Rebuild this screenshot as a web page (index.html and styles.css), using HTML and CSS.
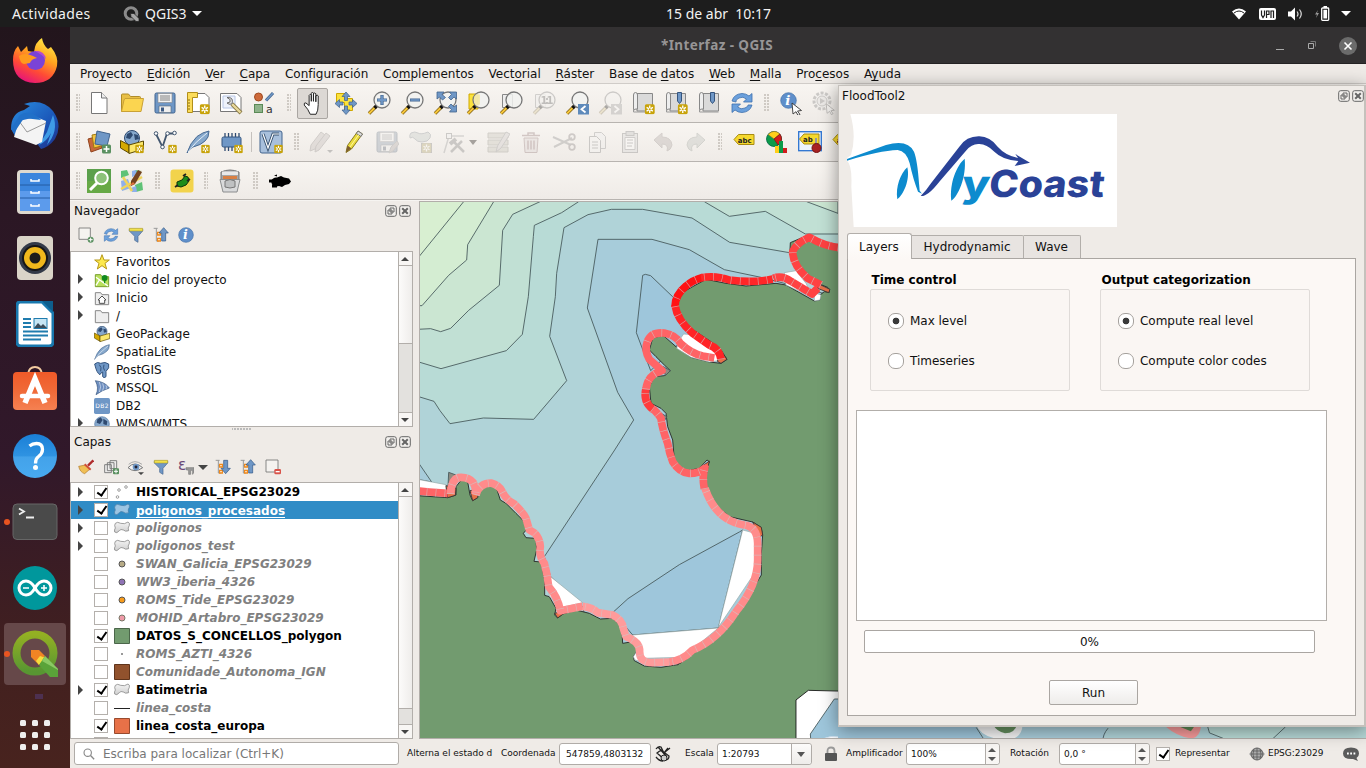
FILE: index.html
```html
<!DOCTYPE html>
<html lang="es">
<head>
<meta charset="utf-8">
<title>*Interfaz - QGIS</title>
<link rel="stylesheet" href="styles.css">
</head>
<body>
<svg class="sprite" aria-hidden="true">
<defs>
<linearGradient id="gBlue" x1="0" y1="0" x2="0" y2="1"><stop offset="0" stop-color="#1a7fd6"/><stop offset=".5" stop-color="#2f93e2"/><stop offset=".52" stop-color="#43a2ea"/><stop offset="1" stop-color="#48aaf0"/></linearGradient>
<linearGradient id="gFox" x1=".8" y1="0" x2=".3" y2="1"><stop offset="0" stop-color="#fff14a"/><stop offset=".4" stop-color="#ffa31f"/><stop offset=".7" stop-color="#ff4b35"/><stop offset="1" stop-color="#e5127c"/></linearGradient>
<linearGradient id="gBird" x1="0" y1="0" x2="1" y2="1"><stop offset="0" stop-color="#2a8ee0"/><stop offset=".6" stop-color="#1b56b8"/><stop offset="1" stop-color="#1f2f86"/></linearGradient>
<linearGradient id="gBag" x1="0" y1="0" x2="0" y2="1"><stop offset="0" stop-color="#f05a28"/><stop offset=".5" stop-color="#f06a38"/><stop offset="1" stop-color="#f58152"/></linearGradient>
<linearGradient id="gQ" x1="0" y1="0" x2="0" y2="1"><stop offset="0" stop-color="#93b023"/><stop offset="1" stop-color="#589632"/></linearGradient>
<linearGradient id="gPoly" x1="0" y1="0" x2="0" y2="1"><stop offset="0" stop-color="#f4f4f4"/><stop offset="1" stop-color="#cfcfcf"/></linearGradient>
</defs>
<symbol id="star-badge" viewBox="0 0 10 10"><rect x=".3" y=".3" width="9.4" height="9.4" rx="1.5" fill="#c8a30a"/><path d="M5 1.5V8.500M2 3.300l6 3.400M8 3.300L2 6.700" stroke="#fff" stroke-width="1.300"/><circle cx="5" cy="5" r="1" fill="#c8a30a"/></symbol>
<symbol id="new" viewBox="0 0 24 24"><path d="M4.500 1.500h10l5.500 5.500v15.500H4.500z" fill="#fff" stroke="#777"/><path d="M14.500 1.500v5.500H20" fill="#eee" stroke="#777"/></symbol>
<symbol id="open" viewBox="0 0 24 24"><path d="M1.500 20.500V4q0-1 1-1h6l2 2.500h9q1 0 1 1V8" fill="#e8bf45" stroke="#b08c28"/><path d="M1.500 20.500L4 9l1-1.500h18.500L21 20.500z" fill="#fbd550" stroke="#c9a135"/></symbol>
<symbol id="save" viewBox="0 0 24 24"><rect x="2" y="2" width="20" height="20" rx="1.500" fill="#6f97c6" stroke="#42648e"/><rect x="5" y="2.500" width="14" height="9" fill="#f2f2f2" stroke="#888" stroke-width=".6"/><path d="M7 5h10M7 7h10M7 9h10" stroke="#666" stroke-width=".8"/><path d="M6 21.500v-6.500h12v6.500z" fill="#eee" stroke="#567" stroke-width=".6"/><rect x="8" y="16.500" width="3" height="4" fill="#3d5b85"/></symbol>
<symbol id="layout" viewBox="0 0 24 24"><path d="M4 2.500h15l4 4v14H4z" fill="#fff" stroke="#777"/><path d="M1.500 1.500h10v5h-5v15h-5z" fill="#fbdc5a" stroke="#b28f1a"/><path d="M2 9h2M2 12h2M2 15h2M2 18h2" stroke="#8a6d10"/><use href="#star-badge" x="13.500" y="13" width="10.500" height="10.500"/></symbol>
<symbol id="layoutmgr" viewBox="0 0 24 24"><path d="M1.500 2.500H18l4 4v14H1.500z" fill="#fff" stroke="#777"/><path d="M4 5h12v12H4z" fill="#eef2fb" stroke="#b8c6e5"/><path d="M13 13l9 9" stroke="#8a7a45" stroke-width="4"/><path d="M13 13l8.500 8.500" stroke="#e9d99c" stroke-width="2.400"/><path d="M8 6.500q3-1 5 1.500 1 2 0 5-3 1-5-1l3-1V8.500z" fill="#ddd" stroke="#555" stroke-width=".8"/></symbol>
<symbol id="style" viewBox="0 0 24 24"><circle cx="6.500" cy="6" r="4" fill="#cd6a3a" stroke="#a04a20"/><path d="M14 9.500L21 2" stroke="#42648e" stroke-width="3"/><path d="M14 9.500L21 2" stroke="#6f97c6" stroke-width="1.600"/><rect x="2.500" y="13.500" width="8" height="8" fill="#8fb38b" stroke="#5a8a56"/><text x="14" y="22" font-size="11" fill="#333">a</text></symbol>
<symbol id="hand" viewBox="0 0 24 24"><path d="M9 22Q7 17 3.500 13.500 3 11 5 11.500L8 14V4.500q1-2 2 0V10 2.500q1-2 2 0V10 3q1.200-1.500 2.200 0v7.500V5q1.300-1.500 2.200 0v8q0 6-2 9z" transform="translate(-.5 -.5) scale(1.080)" fill="#fff" stroke="#222" stroke-width=".9"/></symbol>
<symbol id="pansel" viewBox="0 0 24 24"><path d="M2.500 2.500h10v5h6v12h-8v-8h-8z" fill="#fbe23c" stroke="#d0a800"/><path d="M12 1l4 4.500h-2.500v4h-3v-4H8zM12 23.500l4-4.500h-2.500v-4h-3v4H8zM1 12.500l4.500-4V11H9v3H5.500v2.500zM23 12.500l-4.500-4V11H15v3h3.500v2.500z" fill="#6f97c6" stroke="#3e5f8a" stroke-width=".7"/></symbol>
<symbol id="lens" viewBox="0 0 24 24"><path d="M2 22.500l7-7" stroke="#7b5d12" stroke-width="3.400"/><path d="M2 22.500l6-6" stroke="#f6c63a" stroke-width="2"/><path d="M7.500 17l2.500-2.500" stroke="#111" stroke-width="3.400"/><circle cx="15" cy="9" r="8" fill="#f1f2f0" fill-opacity=".85" stroke="#777" stroke-width="1.300"/></symbol>
<symbol id="zin" viewBox="0 0 24 24"><use href="#lens"/><path d="M15 4v10M10 9h10" stroke="#42648e" stroke-width="3.200"/><path d="M15 4.500v9M10.500 9h9" stroke="#6f97c6" stroke-width="1.800"/></symbol>
<symbol id="zout" viewBox="0 0 24 24"><use href="#lens"/><path d="M10 9h10" stroke="#42648e" stroke-width="3"/><path d="M10.500 9h9" stroke="#6f97c6" stroke-width="1.600"/></symbol>
<symbol id="zfull" viewBox="0 0 24 24"><use href="#lens"/><path d="M4 1h7L9 3.500l3.500 3L9.500 9 6.500 6 4 8zM23.500 1v7L21 6l-3 3-2.500-2.500 3-3L16.500 1zM23.500 21h-7l2-2.500-3-3L18 13l3 3 2.500-2z" fill="#6f97c6" stroke="#42648e" stroke-width=".8"/></symbol>
<symbol id="zsel" viewBox="0 0 24 24"><path d="M3 3h9v15H3z" fill="#fbe23c" stroke="#d0a800"/><use href="#lens"/><path d="M8 5.500q-1 5 2 9l4-1V3.500h-4z" fill="#f3e58a" fill-opacity=".6"/></symbol>
<symbol id="zlay" viewBox="0 0 24 24"><path d="M3.500 3.500h10v13h-10z" fill="#eee" stroke="#888"/><use href="#lens"/></symbol>
<symbol id="znat" viewBox="0 0 24 24"><path d="M3.500 3.500h10v13h-10z" fill="#eee" stroke="#888"/><use href="#lens"/><text x="8.500" y="12.500" font-size="10" font-weight="bold" fill="#555" textLength="13">1:1</text></symbol>
<symbol id="zlast" viewBox="0 0 24 24"><use href="#lens"/><rect x="13" y="13" width="11" height="10.500" fill="#5e8abb"/><path d="M20.500 15l-4 3.300 4 3.200" fill="none" stroke="#fff" stroke-width="1.800"/></symbol>
<symbol id="znext" viewBox="0 0 24 24"><use href="#lens"/><rect x="13" y="13" width="11" height="10.500" fill="#999"/><path d="M16.500 15l4 3.300-4 3.200" fill="none" stroke="#fff" stroke-width="1.800"/></symbol>
<symbol id="map" viewBox="0 0 24 24"><path d="M6 2.500h15.500V20H6z" fill="#dadada" stroke="#888"/><path d="M2.500 4q0-2.500 2-2.500T6.500 4v14H5q-2.500 0-2.500 2z" fill="#eee" stroke="#888"/><path d="M2.500 18v3h19" fill="none" stroke="#999"/></symbol>
<symbol id="mapnew" viewBox="0 0 24 24"><use href="#map"/><use href="#star-badge" x="13.500" y="13" width="10.500" height="10.500"/></symbol>
<symbol id="flag" viewBox="0 0 24 24"><path d="M13.500 1.500h4V10l-2 2.500-2-2.500z" fill="#6f97c6" stroke="#35557f"/></symbol>
<symbol id="bmnew" viewBox="0 0 24 24"><use href="#mapnew"/><use href="#flag"/></symbol>
<symbol id="bm" viewBox="0 0 24 24"><use href="#map"/><use href="#flag"/></symbol>
<symbol id="refresh" viewBox="0 0 24 24"><path d="M2 10Q4 3 12 2.500q4 0 7 2.500l3-2.500V11h-8.500l3-3Q13 5 9 7t-3 4z" fill="#6ba0dc" stroke="#3c70ad" stroke-width=".8"/><path d="M22 14q-2 7-10 7.500-4 0-7-2.500l-3 2.500V13h8.500l-3 3Q11 19 15 17t3-3z" fill="#6ba0dc" stroke="#3c70ad" stroke-width=".8"/></symbol>
<symbol id="cursor" viewBox="0 0 12 14"><path d="M1 1l9.500 7.500-4 .5 2.500 3.500-2 1-2-3.800L2 12z" fill="#fff" stroke="#333" stroke-width=".9"/></symbol>
<symbol id="info" viewBox="0 0 24 24"><circle cx="12" cy="12" r="11" fill="#5f8fca" stroke="#4673aa"/><text x="7.500" y="18.500" font-size="19" font-style="italic" font-weight="bold" class="serif" fill="#fff">i</text></symbol>
<symbol id="identify" viewBox="0 0 24 24"><use href="#info" x="1" y="1" width="17" height="17"/><use href="#cursor" x="12" y="11" width="12" height="14"/></symbol>
<symbol id="gear" viewBox="0 0 24 24"><circle cx="10" cy="10" r="8" fill="#eee" stroke="#777" stroke-width="3" stroke-dasharray="3 1.500"/><circle cx="10" cy="10" r="5" fill="#ddd" stroke="#777"/><path d="M8 7l5 3-5 3z" fill="#777"/><use href="#cursor" x="13" y="12" width="11" height="12"/></symbol>
<symbol id="sources" viewBox="0 0 24 24"><path d="M1 9l11-3 3 12-11 4z" fill="#c9683a" stroke="#90431d"/><path d="M5 5l11-2 2 12-11 3z" fill="#f4c542" stroke="#a17a10"/><path d="M10 1l13 3-3 12-12-2z" fill="#6f97c6" stroke="#42648e"/><rect x="15" y="14.500" width="9" height="9" rx="1.500" fill="#5a9060"/><path d="M19.500 16v6M16.500 19h6" stroke="#fff" stroke-width="1.500"/></symbol>
<symbol id="gpk" viewBox="0 0 24 24"><circle cx="12" cy="8" r="7.500" fill="#86a8cc" stroke="#2f4a70"/><path d="M7 4l4-2 2 3-3 4-4-1zM14 4l4 1 1 4-4 1z" fill="#2f4a70"/><path d="M.5 10.500L9 15v8L.5 18z" fill="#d5a900" stroke="#5c4a00"/><path d="M9 15l14.500-4v8L9 23.500z" fill="#fbe76b" stroke="#5c4a00"/></symbol>
<symbol id="gpkn" viewBox="0 0 24 24"><use href="#gpk"/><use href="#star-badge" x="15" y="14.500" width="9" height="9"/></symbol>
<symbol id="shp" viewBox="0 0 24 24"><path d="M3 4l6.500 13L14 3.500h7" fill="none" stroke="#42566e" stroke-width="1.800"/><g fill="#fff" stroke="#42566e"><circle cx="3" cy="3.500" r="1.800"/><circle cx="9.500" cy="17" r="1.800"/><circle cx="14.500" cy="3.500" r="1.800"/><circle cx="21.500" cy="3" r="1.800"/></g><use href="#star-badge" x="15" y="14.500" width="9" height="9"/></symbol>
<symbol id="feather" viewBox="0 0 24 24"><path d="M1 23Q4 13 11 6.500 17 2 23 1q0 7-4 10-4 4-12 6-4 3-6 6z" fill="#86a8cc" stroke="#486a93"/><path d="M2 22Q9 12 21 3" stroke="#e5eef7" fill="none"/></symbol>
<symbol id="feathern" viewBox="0 0 24 24"><use href="#feather"/><use href="#star-badge" x="15" y="14.500" width="9" height="9"/></symbol>
<symbol id="chip" viewBox="0 0 24 24"><path d="M6 3v18M9.500 3v18M13 3v18M16.500 3v18M20 3v18" stroke="#2f4a70" stroke-width="1.300"/><rect x="3" y="7" width="19" height="10" rx="1.500" fill="#6f97c6" stroke="#35557f"/><use href="#star-badge" x="15" y="14.500" width="9" height="9"/></symbol>
<symbol id="virt" viewBox="0 0 24 24"><rect x="1" y="1" width="22" height="22" rx="2" fill="#a8c0dc" stroke="#42648e"/><path d="M4 4l5 14 5-14h6" fill="none" stroke="#35506e" stroke-width="3"/><path d="M4 4l5 14 5-14h6" fill="none" stroke="#fff" stroke-width="1.200"/><use href="#star-badge" x="15" y="14.500" width="9" height="9"/></symbol>
<symbol id="pencil" viewBox="0 0 24 24"><path d="M4 22.500l1.500-7L16 1l4.500 3-11 15z" fill="#eadb3d" stroke="#8a7c20"/><path d="M16 1l4.500 3-1.500 2.500-4.700-3z" fill="#ddd" stroke="#777"/><path d="M4 22.500l1.500-7 4 3z" fill="#7e5e2f"/><path d="M8 17L17 4.500" stroke="#fff8a0"/></symbol>
<symbol id="pencils" viewBox="0 0 24 24"><g fill="#c5b3ad" stroke="#8c7f7c"><path d="M1 21l1-6L12 2l4 3L6 19z"/><path d="M6 22l1-6L17 3l4 3-11 14z"/></g><path d="M18 20h6l-3 3z" fill="#666"/></symbol>
<symbol id="savee" viewBox="0 0 24 24"><use href="#save"/><path d="M14 23l2-6 6-6 2 3-6 7z" fill="#b5a19b" stroke="#888"/></symbol>
<symbol id="poly" viewBox="0 0 24 24"><path d="M3 3q4-2 7 0t10-1q4 2 2 6t-8 4q-5 0-7-3T2 8q-1-3 1-5z" fill="#b7c9bf" stroke="#789"/><rect x="13" y="13" width="11" height="10" fill="#777"/><use href="#star-badge" x="13" y="13" width="11" height="10"/></symbol>
<symbol id="vertex" viewBox="0 0 24 24"><path d="M3 23L8 6h15" fill="none" stroke="#999" stroke-width="1.500"/><rect x="5.500" y="3.500" width="5" height="5" fill="#eee" stroke="#777"/><path d="M10 22l11-11M12 11l11 11" stroke="#777" stroke-width="2.500"/><path d="M9 14l6-5" stroke="#777" stroke-width="4"/></symbol>
<symbol id="attrs" viewBox="0 0 24 24"><path d="M2 3h20v5H2zM2 10h20v5H2zM2 17h20v5H2z" fill="#c7c0a2" stroke="#8e8a72"/><path d="M10 22l1.500-6L20 2l4 2-9 14z" fill="#cfc3c0" stroke="#888"/></symbol>
<symbol id="trash" viewBox="0 0 24 24"><path d="M5 8h14l-1 14.500H6z" fill="#e5cfcd" stroke="#a66"/><path d="M3 5.500h18M9 5V3h6v2M9 10.500v9M12 10.500v9M15 10.500v9" fill="none" stroke="#a66" stroke-width="1.500"/></symbol>
<symbol id="cut" viewBox="0 0 24 24"><path d="M1 7l18 8M2 17L20 8" stroke="#888" stroke-width="2"/><circle cx="20" cy="7" r="2.800" fill="none" stroke="#877" stroke-width="1.800"/><circle cx="20" cy="17" r="2.800" fill="none" stroke="#877" stroke-width="1.800"/></symbol>
<symbol id="copy" viewBox="0 0 24 24"><path d="M9.500 2.500h7l4 4v12h-11z" fill="#eee" stroke="#888"/><path d="M4.500 6.500h7l4 4v12h-11z" fill="#f5f5f5" stroke="#777"/><path d="M7 12h6M7 15h6M7 18h6" stroke="#777"/></symbol>
<symbol id="paste" viewBox="0 0 24 24"><rect x="4.500" y="3.500" width="15" height="19" fill="#d5d5d5" stroke="#777"/><rect x="8" y="1.500" width="8" height="4" fill="#bbb" stroke="#777"/><path d="M7 7.500h10v12H7z" fill="#fff" stroke="#888"/><path d="M9 10h6M9 13h6M9 16h5" stroke="#777"/></symbol>
<symbol id="undo" viewBox="0 0 24 24"><path d="M3 10l8-7v4q9 0 10 8-1 5-5 6 2-7-5-7v4z" fill="#b9a29b" stroke="#9a8982"/></symbol>
<symbol id="redo" viewBox="0 0 24 24"><path d="M21 10l-8-7v4Q4 7 3 15q1 5 5 6-2-7 5-7v4z" fill="#b3bdb1" stroke="#8d9a8b"/></symbol>
<symbol id="abc" viewBox="0 0 24 24"><path d="M2 9.500L6.500 4.500h15.500v10H6.500z" fill="#f6d92e" stroke="#a78b12"/><text x="5.800" y="12.500" font-size="7" font-weight="bold" fill="#222">abc</text></symbol>
<symbol id="chart" viewBox="0 0 24 24"><circle cx="9" cy="9" r="7.500" fill="#0c9b4a" stroke="#064" stroke-width=".8"/><path d="M9 9L3 4.500Q9-1.500 15 4z" fill="#ffcf1a" stroke="#863" stroke-width=".6"/><path d="M9 9l6-5q4 6-2 11z" fill="#d11c1c" stroke="#711" stroke-width=".6"/><path d="M10 16h4v7h-4z" fill="#ffcf1a"/><path d="M14 11h4v12h-4z" fill="#0c9b4a"/><path d="M18 18h4v5h-4z" fill="#d11c1c"/></symbol>
<symbol id="abpin" viewBox="0 0 24 24"><rect x=".7" y="1.700" width="22.600" height="19" fill="#eef4fc" stroke="#2a72d0" stroke-width="1.300"/><path d="M1.500 9L6 4h15v10H6z" fill="#f6d92e" stroke="#a78b12"/><text x="5" y="12" font-size="7" font-weight="bold" fill="#222">ab</text><path d="M18 8v8" stroke="#999" stroke-width="2"/><circle cx="18.500" cy="18" r="4.500" fill="#a82222" stroke="#711"/></symbol>
<symbol id="osm" viewBox="0 0 24 24"><rect width="24" height="24" fill="#67a946"/><path d="M0 0h24v12H0z" fill="#5ba04c"/><path d="M3 21l7-7" stroke="#fff" stroke-width="3"/><circle cx="14.500" cy="9" r="6.300" fill="#8cc27a" stroke="#fff" stroke-width="2"/></symbol>
<symbol id="osmmap" viewBox="0 0 24 24"><path d="M1 2l21-1 1 21-14 1-8-2z" fill="#eeebdf"/><path d="M1 2l6-1 2 5-8 3zM15 16l7-3 1 8-7 2zM15 1l6 1-4 4z" fill="#5fc277"/><path d="M1 12l7-2 3 9-9 3zM12 2l4-1 1 5-5 2zM11 19l5-2 1 6h-5z" fill="#8fb0ea"/><path d="M3 8l9 14M1 20L22 8" stroke="#f0d35b" stroke-width="2.500"/><path d="M11 12l7-11 4 2-7 12-4 2z" fill="#73421f"/><path d="M9 17l4-4 2 2z" fill="#e2733a"/></symbol>
<symbol id="plug" viewBox="0 0 24 24"><rect x=".5" y=".5" width="23" height="23" rx="3" fill="#f2d34c"/><path d="M7 13l5-2 3-4 3 1 1 4-3 4-5 2-4-1z" fill="#1d8c1a" stroke="#0b350a"/><path d="M13 7l3-2M17 12l3-2M5 18l3-2" stroke="#222" stroke-width="1.800"/></symbol>
<symbol id="bucket" viewBox="0 0 24 24"><path d="M3 3q9-4 18 0v8H3z" fill="#a5a7a8" stroke="#777"/><rect x="4" y="2.500" width="16" height="3.500" fill="#e9e9e9"/><rect x="5" y="7" width="14" height="3.500" fill="#d98043"/><path d="M2 10.500h20l-3 12.500H5z" fill="#d9dadb" stroke="#8b8d8e"/><path d="M7 12q5-3 10 0v6q-5 2-10 0z" fill="#bfc1c2" stroke="#777"/></symbol>
<symbol id="blot" viewBox="0 0 24 24"><path d="M3 12q2-4 6-3.500l4-1.500 3 1.500 5 1 2 3-2 2.500-4 1-3 2-3-1-5 1-2-2.500z"/><path d="M1 10.500h5v3H1zM4 16h5v2.500H4zM6 6.500l3-1v2z"/></symbol>
<symbol id="filter" viewBox="0 0 24 24"><path d="M2 3h20v3l-7 8v9l-5-3v-6L2 6z" fill="#6f97c6" stroke="#42648e"/><path d="M2 2h20v4H2z" fill="#f1e14d" stroke="#b19a20" stroke-width=".8"/></symbol>
<symbol id="addsel" viewBox="0 0 24 24"><path d="M1.500 1.500h17v17h-17z" fill="#f5f3f0" stroke="#777" stroke-width="1.300"/><circle cx="19" cy="19" r="4.500" fill="#5a9060"/><path d="M19 16v6M16 19h6" stroke="#fff" stroke-width="1.500"/></symbol>
<symbol id="collapse" viewBox="0 0 24 24"><path d="M1 2h6M5 2v19h4M5 10h4" fill="none" stroke="#999" stroke-width="1.500"/><path d="M7 8h4v4H7zM7 17h4v4H7z" fill="#fff" stroke="#f08a1d" stroke-width="2"/><path d="M16 1l7 8h-4v12h-6V9H9z" fill="#6f97c6" stroke="#2e5485"/></symbol>
<symbol id="expand" viewBox="0 0 24 24"><path d="M1 2h6M5 2v19h4M5 10h4" fill="none" stroke="#999" stroke-width="1.500"/><path d="M7 8h4v4H7zM7 17h4v4H7z" fill="#fff" stroke="#f08a1d" stroke-width="2"/><path d="M16 22l-7-8h4V2h6v12h4z" fill="#6f97c6" stroke="#2e5485"/></symbol>
<symbol id="brush" viewBox="0 0 24 24"><path d="M15 10l8-8" stroke="#b02c2c" stroke-width="3.500"/><path d="M1 11l10-2 7 6-8 7Q3 20 1 11z" fill="#f0bf55" stroke="#b0782a"/><path d="M10 8l9 8" stroke="#d0503a" stroke-width="3"/></symbol>
<symbol id="group" viewBox="0 0 24 24"><path d="M2.500 8.500h10v12h-10z M6.500 5.500h10v12h-10zM10.500 2.500h10v12h-10z" fill="#eee" fill-opacity=".7" stroke="#777" stroke-width="1.400"/><rect x="15" y="14" width="9" height="9" rx="1.500" fill="#5a9060"/><path d="M19.500 15.500v6M16.500 18.500h6" stroke="#fff" stroke-width="1.500"/></symbol>
<symbol id="eye" viewBox="0 0 24 24"><path d="M0 13Q10 2 22 13 10 22 0 13z" fill="#f3f3f3" stroke="#777" stroke-width="1.500"/><path d="M1 8Q10 0 21 8" fill="none" stroke="#aaa" stroke-width="1.500"/><circle cx="12" cy="12" r="5" fill="#6f97c6"/><circle cx="12" cy="12" r="2.200" fill="#223"/><path d="M15 20h9l-4.500 4z" fill="#444"/></symbol>
<symbol id="eps" viewBox="0 0 24 24"><text x="0" y="16" font-size="23" fill="#6a4a78">ε</text><path d="M12 13h12v6l-2 4v-6h-3v6h-3v-6l-4-1z" fill="#999" stroke="#777"/></symbol>
<symbol id="remove" viewBox="0 0 24 24"><path d="M1.500 1.500h18v18h-18z" fill="#f5f3f0" stroke="#777" stroke-width="1.300"/><rect x="14" y="15" width="10" height="8" rx="2" fill="#d9534a"/><path d="M16 19h6" stroke="#fff" stroke-width="2"/></symbol>
<symbol id="fstar" viewBox="0 0 24 24"><path d="M12 1l3 8h8l-6.500 5L19 22.500 12 17.500 5 22.500 7.500 14 1 9h8z" fill="#fde94d" stroke="#b69818" stroke-width="1.500"/></symbol>
<symbol id="folder" viewBox="0 0 24 24"><path d="M2 4h8l2 3h10v15H2z" fill="#eee" stroke="#888" stroke-width="1.500"/></symbol>
<symbol id="home" viewBox="0 0 24 24"><use href="#folder"/><path d="M6 15l6-6 6 6h-2v5h-8v-5z" fill="#fff" stroke="#444" stroke-width="1.400"/></symbol>
<symbol id="fproj" viewBox="0 0 24 24"><path d="M2 4h8l2 3h10v15H2z" fill="#b8e05c" stroke="#7aa02c" stroke-width="1.500"/><path d="M3 8l18 13M8 12l-5 8" stroke="#fff" stroke-width="2"/><circle cx="16" cy="9" r="4.500" fill="#128a1e"/><path d="M16 10v7" stroke="#128a1e" stroke-width="2"/></symbol>
<symbol id="pg" viewBox="0 0 24 24"><path d="M1 3q4-4 9-1 7-3 12 1 2 6-4 11v8q-3 3-5 0v-7q-3 1-4 4-5-2-8-16z" fill="#6f97c6" stroke="#35557f" stroke-width="1.500"/><path d="M8 4q4 4 2 10M15 4q-2 5 1 9" fill="none" stroke="#35557f" stroke-width="1.500"/></symbol>
<symbol id="ms" viewBox="0 0 24 24"><path d="M2 1q15 2 21 11-10 3-20 10Q8 12 2 1z" fill="#6f8fc0" stroke="#35557f"/><path d="M8 3q4 7 0 15M13 5q3 6 0 11M18 8q2 3 0 6" fill="none" stroke="#c9d7ea" stroke-width="1.200"/></symbol>
<symbol id="db2" viewBox="0 0 24 24"><rect width="24" height="24" rx="2.500" fill="#6f97c6"/><text x="2" y="15" font-size="9" fill="#fff" textLength="20">DB2</text></symbol>
<symbol id="globe" viewBox="0 0 24 24"><circle cx="12" cy="12" r="11" fill="#86a8cc" stroke="#5a7da8"/><path d="M5 5l5-3 3 4-4 6-5-2zM14 4l6 4-1 6-5-2zM10 15l5 2-3 5z" fill="#2f4a70"/></symbol>
<symbol id="gpoly" viewBox="0 0 24 24"><path d="M2 5q3-3 8 0 6 2 11-2 3 1 2 5-3 4-1 8-5 2-8-1-4-2-6 1-4 5-7 2-1-3 1-6-2-4 0-7z" fill="url(#gPoly)" stroke="#888" stroke-width="1.200"/></symbol>
<symbol id="float" viewBox="0 0 12 12"><rect x=".7" y=".7" width="10.600" height="10.600" rx="2" fill="#f3f1ee" stroke="#666"/><path d="M5 3h4v4H5z M3 5h4v4H3z" fill="#f3f1ee" stroke="#666"/></symbol>
<symbol id="close" viewBox="0 0 12 12"><rect x=".7" y=".7" width="10.600" height="10.600" rx="2" fill="#f3f1ee" stroke="#666"/><path d="M3.200 3.200l5.600 5.600M8.800 3.200L3.200 8.800" stroke="#666" stroke-width="2"/></symbol>
</svg>

<header class="topbar">
  <span class="act">Actividades</span>
  <span class="app"><svg class="qmini" viewBox="0 0 16 16"><circle cx="8" cy="7.500" r="5.800" fill="none" stroke="#8b8b8b" stroke-width="3"/><path d="M7.500 7.500h3.500l5 5v3h-3l-5-5z" fill="#a5a5a5" stroke="#1d1d1d" stroke-width=".7"/></svg><span>QGIS3</span><svg class="tri" viewBox="0 0 10 5"><path d="M0 0h10L5 5z" fill="#fff"/></svg></span>
  <span class="clock">15 de abr&nbsp; 10:17</span>
  <span class="tray">
    <svg width="16" height="14" viewBox="0 0 16 14"><path d="M1 4.500Q8-1.500 15 4.500L8 12.500z" fill="#fff"/><path d="M3 6Q8 2 13 6" fill="none" stroke="#1d1d1d" stroke-width="1"/></svg>
    <svg width="17" height="12" viewBox="0 0 17 12"><rect width="17" height="12" rx="2" fill="#fff"/><path d="M2.500 2.500V7L4 9.500 5.500 7V2.500M7.500 10V3h2.500v3.500H7.500M12 10V3h2.500v7" fill="none" stroke="#1d1d1d" stroke-width="1.200"/></svg>
    <svg width="16" height="14" viewBox="0 0 16 14"><path d="M1 4.500h3l4-4v13l-4-4H1z" fill="#fff"/><path d="M10 4.500q2 2.500 0 5M12.500 2.500q3.500 4.500 0 9" fill="none" stroke="#ddd" stroke-width="1.200"/></svg>
    <svg width="15" height="15" viewBox="0 0 15 15"><path d="M3 4L0 8.500h2L1 12l3-5H2z" fill="#999"/><rect x="6.700" y="2" width="7" height="12.300" rx=".8" fill="none" stroke="#fff" stroke-width="1.300"/><path d="M8.500 0h3.500v2H8.500zM8.400 3.800h3.700v8.700H8.400z" fill="#fff"/></svg>
    <svg class="tri" viewBox="0 0 10 5"><path d="M0 0h10L5 5z" fill="#fff"/></svg>
  </span>
</header>

<div class="desktop">
<nav class="dock">
  <div class="slot"><svg width="48" height="48" viewBox="0 0 48 48"><path d="M24 47Q2 46 2 24 2 15 7 10l3 6 6-6 1 5 6 1Q24 6 31 2q1 7 6 11l3-2q8 10 6 19-4 17-22 17z" fill="url(#gFox)"/><circle cx="24.500" cy="24.500" r="9.500" fill="#7a43d6"/><path d="M24 15q9-1 11 8-5-5-11-8z" fill="#b34bd0"/><path d="M8 20q5-4 14 0l4 2q-6 1-7 5l-6 1q-4-1-5-8z" fill="#ff9a1e"/></svg></div>
  <div class="slot"><svg width="50" height="50" viewBox="0 0 50 50"><path d="M14 3q18-6 29 7 10 14 2 28-6 8-14 10l-6-8L5 35 1 28Q1 12 14 9l6-4z" fill="url(#gBird)"/><path d="M43 14q6 16-6 30l4-12q-4 8-12 12l8-13z" fill="#3e9be6"/><path d="M9 20l17-4 10 4-4 21-6 3L4 36z" fill="#f4f4f4"/><path d="M9 20l8 11 19-9" fill="none" stroke="#999"/><path d="M1 28l9-14q6-4 13-1 6 3 8 6L14 17 4 32z" fill="#2170c8"/></svg></div>
  <div class="slot"><svg width="38" height="46" viewBox="0 0 38 46"><rect x="1" y="1" width="36" height="44" rx="4" fill="#ded9cf"/><rect x="4" y="4" width="30" height="38" rx="1" fill="#3b85dd"/><path d="M4 22h30v20H4z" fill="#5c9bec"/><path d="M4 16h30M4 29h30" stroke="#245ca4"/><path d="M15 10v2h8v-2M15 22v2h8v-2M15 35v2h8v-2" fill="none" stroke="#fff" stroke-width="1.500"/></svg></div>
  <div class="slot"><svg width="38" height="46" viewBox="0 0 38 46"><rect x="1" y="1" width="36" height="44" rx="4" fill="#dad4c8"/><circle cx="19" cy="23" r="16" fill="#333a48"/><circle cx="19" cy="23" r="13" fill="#171717"/><circle cx="19" cy="23" r="11" fill="#f0b81c"/><circle cx="19" cy="23" r="5.500" fill="#1c1c1c"/></svg></div>
  <div class="slot"><svg width="38" height="46" viewBox="0 0 38 46"><path d="M4 1h22l11 11v29q0 4-4 4H5q-4 0-4-4V5q0-4 3-4z" fill="#fff" stroke="#1878ae" stroke-width="3"/><path d="M26 0h11v11z" fill="#0e5e8d"/><path d="M7 18h8M7 22h8M7 26h8M7 30.500h25M7 34.500h25M7 38.500h18" stroke="#207cae" stroke-width="1.800"/><rect x="18" y="17.500" width="13" height="10" fill="#c7e6f5" stroke="#207cae"/><path d="M18 27l4-5 3 3 2-2 4 4z" fill="#3b4c5a"/></svg></div>
  <div class="slot"><svg class="bag" width="46" height="46" viewBox="0 0 46 46"><path d="M16 9q1-7 7-7t7 7" fill="none" stroke="#f3cba0" stroke-width="2"/><rect x="1" y="7" width="44" height="38" rx="4" fill="url(#gBag)"/><path d="M13 38l10-24 10 24" fill="none" stroke="#fff" stroke-width="5.500"/><path d="M10 31h26" stroke="#fff" stroke-width="4.500" stroke-linecap="round"/></svg></div>
  <div class="slot"><svg width="46" height="46" viewBox="0 0 46 46"><circle cx="23" cy="23" r="22" fill="url(#gBlue)"/><path d="M17.500 13q3-2.500 7-2.500 6 0 6 6 0 4-4 7-3 2-3 7" fill="none" stroke="#fff" stroke-width="3.300"/><circle cx="23.500" cy="34.500" r="2.500" fill="#fff"/></svg></div>
  <div class="slot run"><svg width="46" height="38" viewBox="0 0 46 38"><rect x="1" y="1" width="44" height="35.500" rx="4" fill="#4a4a4a" stroke="#666"/><path d="M7 5.500l5 3-5 3M14 14.500h8" fill="none" stroke="#eee" stroke-width="1.800"/></svg></div>
  <div class="slot"><svg width="46" height="46" viewBox="0 0 46 46"><circle cx="23" cy="23" r="22" fill="#00979c"/><path d="M23 23q-4-7-9-7a7 7 0 000 14q5 0 9-7 4-7 9-7a7 7 0 010 14q-5 0-9-7z" fill="none" stroke="#fff" stroke-width="3"/><path d="M11 23h6M29 23h6M32 20v6" stroke="#fff" stroke-width="1.500"/></svg></div>
  <div class="slot run"><div class="active"><svg width="48" height="48" viewBox="0 0 48 48"><circle cx="24" cy="23" r="18.500" fill="none" stroke="url(#gQ)" stroke-width="8"/><path d="M20 20l8 0 6 6-6 9-8-8z" fill="#f08424"/><path d="M29 26l-4 5 3 4 7-7z" fill="#f7dc3e"/><path d="M34 26l13 13v8h-8L28 35z" fill="#5aa339"/><path d="M34 26l13 13v1L31 31z" fill="#8bc964"/></svg></div></div>
  <div class="mini"></div>
  <div class="apps"><i></i><i></i><i></i><i></i><i></i><i></i><i></i><i></i><i></i></div>
</nav>

<main class="window">
  <div class="titlebar"><span>*Interfaz - QGIS</span><div class="wbtns"><svg width="9" height="12"><path d="M0 9.500h8" stroke="#aaa"/></svg><svg width="9" height="9"><path d="M.5 2.500h5v5h-5z" fill="none" stroke="#aaa"/><path d="M2.500.5h5v5" fill="none" stroke="#777"/></svg><b><svg width="18" height="18"><circle cx="9" cy="9" r="9" fill="#6b6b6b"/><path d="M5.500 5.500l7 7M12.500 5.500l-7 7" stroke="#fff" stroke-width="1.600"/></svg></b></div></div>
  <div class="menubar"><span>Pro<u>y</u>ecto</span><span><u>E</u>dición</span><span><u>V</u>er</span><span><u>C</u>apa</span><span>Co<u>n</u>figuración</span><span>Co<u>m</u>plementos</span><span>Vect<u>o</u>rial</span><span><u>R</u>áster</span><span>Base de <u>d</u>atos</span><span><u>W</u>eb</span><span><u>M</u>alla</span><span>Pro<u>c</u>esos</span><span>A<u>y</u>uda</span></div>
  <div class="toolbar"><i class="grip first"></i>
    <svg><use href="#new"/></svg><svg><use href="#open"/></svg><svg><use href="#save"/></svg><svg><use href="#layout"/></svg><svg><use href="#layoutmgr"/></svg><svg><use href="#style"/></svg><i class="grip"></i>
    <span class="pressed"><svg><use href="#hand"/></svg></span><svg><use href="#pansel"/></svg><svg><use href="#zin"/></svg><svg><use href="#zout"/></svg><svg><use href="#zfull"/></svg><svg><use href="#zsel"/></svg><svg><use href="#zlay"/></svg><svg class="off"><use href="#znat"/></svg><svg><use href="#zlast"/></svg><svg class="off"><use href="#znext"/></svg><svg><use href="#mapnew"/></svg><svg><use href="#bmnew"/></svg><svg><use href="#bm"/></svg><svg><use href="#refresh"/></svg><i class="grip wide"></i><svg><use href="#identify"/></svg><svg class="off"><use href="#gear"/></svg>
  </div>
  <div class="toolbar"><i class="grip first"></i>
    <svg><use href="#sources"/></svg><svg><use href="#gpkn"/></svg><svg><use href="#shp"/></svg><svg><use href="#feathern"/></svg><svg><use href="#chip"/></svg><i class="sep"></i><svg><use href="#virt"/></svg><i class="grip wide"></i>
    <svg class="off"><use href="#pencils"/></svg><svg><use href="#pencil"/></svg><svg class="off"><use href="#savee"/></svg><svg class="off"><use href="#poly"/></svg><svg class="off"><use href="#vertex"/></svg><span class="drop"></span><svg class="off"><use href="#attrs"/></svg><svg class="off"><use href="#trash"/></svg><svg class="off"><use href="#cut"/></svg><svg class="off"><use href="#copy"/></svg><svg class="off"><use href="#paste"/></svg><svg class="off"><use href="#undo"/></svg><svg class="off"><use href="#redo"/></svg><i class="grip"></i><svg><use href="#abc"/></svg><svg><use href="#chart"/></svg><svg><use href="#abpin"/></svg><svg><use href="#abc"/></svg>
  </div>
  <div class="toolbar"><i class="grip first"></i><svg><use href="#osm"/></svg><svg><use href="#osmmap"/></svg><i class="grip wide"></i><svg><use href="#plug"/></svg><i class="grip"></i><svg><use href="#bucket"/></svg><i class="grip wide"></i><svg><use href="#blot"/></svg></div>

  <div class="body">
    <aside class="panels">
      <section class="panel nav">
        <h2>Navegador<span><svg><use href="#float"/></svg><svg><use href="#close"/></svg></span></h2>
        <div class="ptools"><svg><use href="#addsel"/></svg><svg><use href="#refresh"/></svg><svg><use href="#filter"/></svg><svg><use href="#collapse"/></svg><svg><use href="#info"/></svg></div>
        <div class="list"><div class="rows">
          <p><i></i><svg><use href="#fstar"/></svg>Favoritos</p>
          <p><i class="arr"></i><svg><use href="#fproj"/></svg>Inicio del proyecto</p>
          <p><i class="arr"></i><svg><use href="#home"/></svg>Inicio</p>
          <p><i class="arr"></i><svg><use href="#folder"/></svg>/</p>
          <p><i></i><svg><use href="#gpk"/></svg>GeoPackage</p>
          <p><i></i><svg><use href="#feather"/></svg>SpatiaLite</p>
          <p><i></i><svg><use href="#pg"/></svg>PostGIS</p>
          <p><i></i><svg><use href="#ms"/></svg>MSSQL</p>
          <p><i></i><svg><use href="#db2"/></svg>DB2</p>
          <p><i class="arr"></i><svg><use href="#globe"/></svg>WMS/WMTS</p>
        </div><div class="scroll"><i class="up"></i><i class="thumb"></i><i class="track"></i><i class="dn"></i></div></div>
      </section>
      <div class="hsplit"></div>
      <section class="panel layers">
        <h2>Capas<span><svg><use href="#float"/></svg><svg><use href="#close"/></svg></span></h2>
        <div class="ptools"><svg><use href="#brush"/></svg><svg><use href="#group"/></svg><svg><use href="#eye"/></svg><svg><use href="#filter"/></svg><svg><use href="#eps"/></svg><em></em><svg><use href="#expand"/></svg><svg><use href="#collapse"/></svg><svg><use href="#remove"/></svg></div>
        <div class="list"><div class="rows">
          <p class="on"><i class="arr"></i><b></b><svg viewBox="0 0 16 16"><g fill="#fff" stroke="#888" stroke-width=".8"><circle cx="5" cy="6" r="1.300"/><circle cx="12" cy="3" r="1.300"/><circle cx="3.500" cy="13" r="1.300"/></g></svg>HISTORICAL_EPSG23029</p>
          <p class="on sel"><i class="arr"></i><b></b><svg viewBox="0 0 24 24"><path d="M2 5q3-3 8 0 6 2 11-2 3 1 2 5-3 4-1 8-5 2-8-1-4-2-6 1-4 5-7 2-1-3 1-6-2-4 0-7z" fill="#9cc4e2" stroke="#4b7da6"/></svg><span>poligonos_procesados</span></p>
          <p><i class="arr"></i><b></b><svg><use href="#gpoly"/></svg>poligonos</p>
          <p><i class="arr"></i><b></b><svg><use href="#gpoly"/></svg>poligonos_test</p>
          <p><i></i><b></b><svg viewBox="0 0 16 16"><circle cx="8" cy="8" r="3" fill="#b7ab86" stroke="#555"/></svg>SWAN_Galicia_EPSG23029</p>
          <p><i></i><b></b><svg viewBox="0 0 16 16"><circle cx="8" cy="8" r="3" fill="#8f73b5" stroke="#555"/></svg>WW3_iberia_4326</p>
          <p><i></i><b></b><svg viewBox="0 0 16 16"><circle cx="8" cy="8" r="3" fill="#f89c1c" stroke="#555"/></svg>ROMS_Tide_EPSG23029</p>
          <p><i></i><b></b><svg viewBox="0 0 16 16"><circle cx="8" cy="8" r="3" fill="#ee9aa8" stroke="#776"/></svg>MOHID_Artabro_EPSG23029</p>
          <p class="on"><i></i><b></b><svg viewBox="0 0 16 16"><path d="M.5.5h15v15H.5z" fill="#729b6f" stroke="#4b664a"/></svg>DATOS_S_CONCELLOS_polygon</p>
          <p><i></i><b></b><svg viewBox="0 0 16 16"><circle cx="8" cy="8" r="1" fill="#777"/></svg>ROMS_AZTI_4326</p>
          <p><i></i><b></b><svg viewBox="0 0 16 16"><path d="M.5.5h15v15H.5z" fill="#91522d" stroke="#5f341b"/></svg>Comunidade_Autonoma_IGN</p>
          <p class="on"><i class="arr"></i><b></b><svg><use href="#gpoly"/></svg>Batimetria</p>
          <p><i></i><b></b><svg viewBox="0 0 16 16"><path d="M0 8.500h16" stroke="#222"/></svg>linea_costa</p>
          <p class="on"><i></i><b></b><svg viewBox="0 0 16 16"><path d="M.5.500h15v15H.5z" fill="#e77148" stroke="#984a2e"/></svg>linea_costa_europa</p>
          <p><i></i><b></b></p>
        </div><div class="scroll"><i class="up"></i><i class="thumb"></i><i class="track"></i><i class="dn"></i></div></div>
      </section>
    </aside>
    <div class="vsplit"></div>
    <svg class="map" viewBox="420 202 946 536">
      <g transform="translate(416 200) scale(.33333)" stroke="#46585a" stroke-width="2.600" stroke-linejoin="round">
        <path d="M0 0H2900V1620H0z" fill="#d8efd1" stroke="none"/>
        <path d="M9 170L143 5V0H2900V1630H0V166z" fill="#d4edd2"/>
        <path d="M5 317H18L98 226 152 180 155 134 233 5V0H2900V1630H5z" fill="#cbe6d2"/>
        <path d="M5 388L44 386 74 395 104 385 158 331 250 256 260 91 290 43 372 5V0H2900V1630H5z" fill="#c1e0d4"/>
        <path d="M5 485L75 506 271 452 319 403 337 290 352 110 355 76 437 38 488 5V-5H865V5L940 49 1048 34 1168 102H2900V1630H5z" fill="#b8dbd6"/>
        <path d="M1172 0V5L1266 40V-10z" fill="#cbe6d2"/>
        <path d="M5 589L54 604 72 632 102 671 202 654 353 658 452 542 401 409 418 290 422 220 444 83 516 44 586 28H680L828 54 941 127 1120 158 1300 170V1630H5z" fill="#b0d3d8"/>
        <path d="M385 1070L596 750 653 660 605 577 514 324 546 118H708L820 149 925 209 1035 232 1300 300V1630H600L500 1220 404 1130z" fill="#a7ccda"/>
        <path d="M704 512L661 398 680 226 688 223 704 227 775 295 850 380 800 420z" fill="#9ec6db"/>
        <path d="M5 785L12 795 47 846 5 838z" fill="#a7ccda"/>
        <path d="M592 1236L636 1196 790 1094 970 996 980 990 907 1284 650 1305z" fill="#9ec6db"/>
        <path d="M5 887L95 893 120 885 120 860 140 835 155 845 162 885 170 902 185 893 185 875 200 860 225 855 240 860 253 900 270 910 300 940 320 960 335 985 322 1000 330 1013 360 1015 362 1050 354 1084 375 1086 386 1140V1186L400 1190 420 1225 416 1245 425 1254 440 1242 480 1230 520 1240 553 1257 590 1255 617 1280 620 1330 650 1325 665 1350 652 1370 655 1382 685 1398 735 1402 785 1394 810 1378 835 1358 900 1315 965 1245 1000 1185 1036 1125V1060L1040 1005 1035 982 1010 966 940 950 900 915 872 865 870 810 880 785 873 780 850 805 800 815 775 780 770 720 755 680 750 640 735 625 705 610 700 560 715 530 745 527 763 512 745 495 720 470 700 450 710 415 740 405 780 440 825 472 880 486 915 490 933 478 915 450 885 425 840 395 810 380 790 345 783 310 795 280 830 260 870 238 930 250 990 258 1080 250 1110 255 1195 303 1212 300V285L1225 275 1240 277 1235 262 1200 248 1165 225 1140 185 1122 150 1123 128 1170 108 1266 145H1300V1630H5z" fill="#729b6f" stroke="#222"/>
        <g fill="#fff" stroke="#9aa" stroke-width="2"><path d="M803 402L835 405 915 450 920 480 880 486 825 472 782 445 790 420zM1105 218L1140 212 1170 250 1190 292 1110 255zM5 838L90 854V872L5 866zM404 1130L500 1208 440 1222 400 1188 398 1150zM650 1305L907 1284 800 1372 680 1375zM980 990L1018 1000 1022 1110 907 1282z"/><path d="M1195 303L1212 300 1215 285 1195 278zM652 1370L665 1350 675 1385 657 1380z"/></g>
        <path d="M98 817L120 825 95 880zM742 500L763 512 748 527zM735 640L753 650 745 662z" fill="#8f8b80"/>
        <path d="M90 857L120 865 118 886 95 893zM162 872L188 868 185 893 170 902zM416 1240L435 1235 440 1243 425 1254zM850 805L880 783 872 820zM1010 966L1036 982 1040 1005 1030 1012zM905 440L933 478 915 490 905 485zM1200 248L1242 268 1238 278 1205 265zM785 1394L810 1378 805 1368z" fill="#e77148" stroke="#333"/>
        <g fill="none" stroke-width="23" stroke-linejoin="round">
          <path stroke="#ff6466" d="M5 873L40 876 95 880"/>
          <path stroke="#ff8b8b" d="M104 882Q106 832 135 832 160 832 172 848 182 868 177 885M180 885Q188 850 225 849 248 855 257 872 270 900 295 912 322 938 330 955L340 990Q370 1002 373 1040 368 1068 385 1090 395 1125 398 1160 425 1190 433 1232L500 1219"/>
          <path stroke="#ff9b9b" d="M500 1219Q530 1222 545 1238L590 1245Q618 1258 622 1285L630 1310Q672 1325 671 1355 670 1388 710 1388L760 1386"/>
          <path stroke="#ff8b8b" d="M760 1386Q800 1382 830 1350 905 1320 960 1235 1025 1155 1025 1080V1030Q1024 980 985 975 900 962 867 865"/>
          <path stroke="#ff6466" d="M865 867Q858 830 866 805 850 820 820 820 790 818 770 785 760 760 755 730 738 685 735 655 722 635 710 627"/>
          <path stroke="#ff3b3c" d="M711 628Q680 605 690 565"/>
          <path stroke="#ff6466" d="M690 568Q694 525 738 512 712 488 700 478 684 450 694 425 705 395 745 399 780 405 793 430 825 460 860 468L895 474"/>
          <path stroke="#ff2426" d="M915 478Q910 445 880 435L830 400Q783 360 777 315"/>
          <path stroke="#ff1214" d="M777 320Q777 285 810 258 830 240 860 232"/>
          <path stroke="#ff2628" d="M855 233Q900 225 940 240 1010 250 1070 237"/>
          <path stroke="#ff4243" d="M1072 235Q1098 225 1125 244L1188 282 1205 265M1215 255L1175 235Q1130 195 1130 155 1140 130 1180 112 1225 138 1270 143"/>
          <path stroke="#ff6466" d="M864 815L874 795" stroke-width="12"/>
        </g>
        <path d="M5 873L95 880M104 882Q106 832 135 832 160 832 172 848 182 868 177 885M180 885Q188 850 225 849 248 855 257 872 270 900 295 912 322 938 330 955L340 990Q370 1002 373 1040 368 1068 385 1090 395 1125 398 1160 425 1190 433 1232L500 1219Q530 1222 545 1238L590 1245Q618 1258 622 1285L630 1310Q672 1325 671 1355 670 1388 710 1388L760 1386Q800 1382 830 1350 905 1320 960 1235 1025 1155 1025 1080V1030Q1024 980 985 975 900 962 867 865M690 568Q694 525 738 512M694 425Q705 395 745 399 780 405 793 430 825 460 860 468L895 474M711 628Q680 605 690 565M865 867Q858 830 866 805 850 820 820 820 790 818 770 785 760 760 755 730 738 685 735 655 722 635 710 627M915 478Q910 445 880 435L830 400Q783 360 777 315 777 285 810 258 830 240 860 232 900 225 940 240 1010 250 1070 237 1098 225 1125 244L1188 282M1215 255L1175 235Q1130 195 1130 155 1140 130 1180 112 1225 138 1270 143" fill="none" stroke="#cfc5c5" stroke-opacity=".75" stroke-width="24" stroke-dasharray="2 25"/>
        <path d="M1140 1630V1500L1177 1471 1300 1474V1630z" fill="#fff" stroke="#111"/>
        <path d="M1183 1602L1255 1497H1300V1630H1185z" fill="#9ec6db"/>
        <path d="M1200 1630q40-35 100-10v20z" fill="#fff" stroke="#cde"/>
      </g>
      <g transform="translate(836 620) scale(.338)">
        <path d="M6 290H1600V360H6z" fill="#9dc5da"/><path d="M395 290L440 360H1600V290z" fill="#a9cdda"/><path d="M805 300L790 360H1600V300z" fill="#afd3d8"/><path d="M1095 310L1105 334 1165 358H1600V310z" fill="#b9dbd6"/><path d="M1330 315L1285 358H1600V315z" fill="#b5d7d6"/>
        <path d="M415 310H552Q550 355 500 354 430 350 415 310z" fill="#f4f4f4"/><path d="M465 310H535Q530 335 500 335 475 330 465 310z" fill="#648f5f"/>
        <path d="M415 318L442 360M805 320Q788 340 790 360M1098 310L1105 334 1165 358M1330 316L1285 358" fill="none" stroke="#46585a" stroke-width="2.500"/>
        <path d="M975 315H1080Q1075 350 1050 350 1010 345 975 315z" fill="#f79a9a"/><path d="M1015 315h45l-10 14z" fill="#5c8a55"/>
      </g>
    </svg>
  </div>

  <footer class="status">
    <div class="search"><svg viewBox="0 0 14 14"><circle cx="5.500" cy="5.500" r="4.300" fill="none" stroke="#888" stroke-width="1.300"/><path d="M8.800 8.800L13 13" stroke="#888" stroke-width="1.600"/></svg>Escriba para localizar (Ctrl+K)</div>
    <span class="c2">Alterna el estado d</span><span class="c3">Coordenada</span><div class="field f1">547859,4803132</div>
    <svg class="c5" viewBox="0 0 16 16"><path d="M1 3q2-3 5-2l3 6 4-5M2 7l8 7q4 0 4-4L6 4zM3 1l9 10M10 6l5-4M1 11q3 4 7 4" fill="none" stroke="#222" stroke-width="1.300"/><circle cx="9" cy="12" r="3" fill="#ccc" stroke="#222"/></svg>
    <span class="c6">Escala</span><div class="field combo">1:20793<i></i></div>
    <svg class="c8" viewBox="0 0 14 16"><path d="M3.500 8V5q0-3.500 3.500-3.500T10.500 5v3" fill="none" stroke="#999" stroke-width="1.800"/><rect x="1" y="7" width="12" height="8" rx="1" fill="#555"/></svg>
    <span class="c9">Amplificador</span><div class="field spin">100%<i></i></div><span class="c11">Rotación</span><div class="field spin">0,0 °<i></i></div>
    <b class="ck"></b><span class="c14">Representar</span>
    <svg class="c15" viewBox="0 0 16 16"><path d="M0 8q8-9 16 0-8 9-16 0z" fill="#aaa"/><circle cx="8" cy="8" r="6" fill="#aaa" stroke="#666"/><path d="M2 8h12M3 5h10M3 11h10M8 2v12M5 3q-2 5 0 10M11 3q2 5 0 10" fill="none" stroke="#555" stroke-width=".7"/></svg>
    <span class="c16">EPSG:23029</span>
    <svg class="c17" viewBox="0 0 16 15"><path d="M8 1q8 0 8 6 0 3-2.500 4.500L15 14.500l-5-2Q0 13 0 7 0 1 8 1z" fill="#5b5b5b"/><path d="M4 7h1.800M7.200 7H9M10.500 7h1.800" stroke="#fff" stroke-width="1.800"/></svg>
  </footer>
</main>
</div>

<section class="dialog">
  <h1>FloodTool2<span><svg><use href="#float"/></svg><svg><use href="#close"/></svg></span></h1>
  <svg class="logo" viewBox="33 102 810 339"><path d="M43 102Q62 170 45 225L33 234V242Q49 255 46 320L53 441H843V102z" fill="#fff"/>
    <g fill="#0d8bce"><path d="M33 237L150 195Q215 176 234 215 244 240 249 310L251 332 258 341 246 335Q232 300 221 250 211 213 185 210 130 212 33 242z"/><path d="M214 262C223 300 202 345 184 358 178 320 194 280 214 262zM386 236C392 290 366 350 346 362 340 310 362 256 386 236z"/></g>
    <path d="M254 348Q272 330 285 310L370 200Q392 168 430 169 462 170 485 200 508 226 546 234L538 222 582 248 536 258 547 243Q500 240 475 215 452 192 430 192 408 190 390 212L310 305Q275 350 254 348z" fill="#2a4297"/>
    <g class="wordmark" font-size="112" transform="translate(37 0) skewX(-6)"><text x="374" y="350" fill="#0d8bce" textLength="84" lengthAdjust="spacingAndGlyphs">y</text><text x="456" y="350" fill="#2a4297" textLength="346" lengthAdjust="spacingAndGlyphs">Coast</text></g>
  </svg>
  <div class="tabs"><span class="cur">Layers</span><span>Hydrodynamic</span><span>Wave</span></div>
  <div class="pane">
    <div class="groups">
      <div class="grp g1"><h3>Time control</h3><div class="box"><label class="r on">Max level</label><label class="r">Timeseries</label></div></div>
      <div class="grp g2"><h3>Output categorization</h3><div class="box"><label class="r on">Compute real level</label><label class="r">Compute color codes</label></div></div>
    </div>
    <div class="out"></div>
    <div class="prog">0%</div>
    <div class="btn">Run</div>
  </div>
</section>
</body>
</html>
```

FILE: styles.css
```css
* { box-sizing: border-box; margin: 0; padding: 0; }
body { width: 1366px; height: 768px; overflow: hidden; font: 12px/18px "DejaVu Sans", sans-serif; color: #111; background: #efebe7; position: relative; }
.sprite { position: absolute; width: 0; height: 0; visibility: hidden; }
svg text { font-family: "DejaVu Sans", sans-serif; }
svg text.serif { font-family: "DejaVu Serif", serif; }
i, em { font-style: normal; }

.topbar { height: 27px; background: #1d1d1d; color: #f2f2f2; font: 14px/27px "Noto Sans", sans-serif; display: grid; grid-template-columns: 111px 494px 1fr 133px; align-items: center; }
.act { padding-left: 12px; letter-spacing: .35px; }
.app { display: flex; align-items: center; padding-left: 12px; }
.qmini { width: 16px; height: 16px; margin-right: 6px; }
.tri { width: 10px; height: 5px; }
.app .tri { margin-left: 5px; }
.clock { padding-left: 61px; white-space: nowrap; }
.tray { display: flex; align-items: center; justify-content: space-between; padding: 0 15px 0 0; margin-left: -2px; }
.tray svg { flex: none; }

.desktop { display: flex; height: 741px; }
.dock { width: 70px; background: linear-gradient(#22151c, #2b1724 25%, #31182a 58%, #42201f 85%, #48231e); display: flex; flex-direction: column; align-items: center; }
.slot { height: 66px; width: 70px; display: flex; align-items: center; justify-content: center; flex: none; position: relative; }
.slot .bag { margin-top: -4px; }
.slot.run::before { content: ""; position: absolute; left: 4px; top: 30px; width: 6px; height: 6px; border-radius: 3px; background: #e95420; z-index: 2; }
.active { width: 62px; height: 62px; background: #664849; border-radius: 4px; display: flex; align-items: center; justify-content: center; }
.mini { width: 8px; height: 5px; background: #4d3050; margin: 7px 0 0 8px; }
.apps { display: grid; grid-template-columns: repeat(3, 6px); gap: 6px; margin-top: 21px; }
.apps i { width: 6px; height: 6px; border-radius: 1.500px; background: #eee; }

.window { width: 1296px; display: flex; flex-direction: column; background: #efebe7; }
.titlebar { height: 37px; background: #333132; border-bottom: 1px solid #242223; color: #979596; font: bold 14px/37px "Noto Sans", sans-serif; text-align: center; display: grid; grid-template-columns: 1fr 90px; flex: none; }
.titlebar > span { padding-left: 88px; font-size: 13.500px; letter-spacing: .4px; }
.wbtns { display: flex; align-items: center; justify-content: space-between; padding-right: 9px; }
.wbtns svg { display: block; }
.menubar { height: 20px; padding-left: 10px; display: flex; gap: 14.750px; line-height: 20px; border-bottom: 1px solid #d0ccc8; flex: none; }
.menubar span { white-space: nowrap; }
.menubar u { text-underline-offset: 2px; }
.toolbar { height: 39px; display: flex; align-items: center; background: linear-gradient(#f8f5f1, #efebe7); border-bottom: 1px solid #b8b4b0; flex: none; overflow: hidden; }
.toolbar:nth-of-type(5) { height: 38px; }
.toolbar svg { width: 24px; height: 24px; margin: 0 4.500px; flex: none; }
.toolbar svg.off { opacity: .32; filter: saturate(.4); }
.grip { width: 15px; height: 18px; flex: none; background: radial-gradient(circle at 1px 1px, #cfcac4 1px, transparent 1.200px) 0 0 / 3px 3px; background-clip: content-box; padding: 0 5px; margin-right: .5px; }
.grip.wide { width: 16px; padding: 0 5px 0 6px; }
.grip.first { width: 12.500px; padding: 0 3px 0 5px; margin: 0; }
.grip + .pressed { margin-left: 1px; }
.pressed { width: 31px; height: 31px; background: #dcd8d4; border: 1px solid #aaa6a2; border-radius: 2px; display: flex; align-items: center; justify-content: center; flex: none; margin: 0 1px; }
.toolbar .pressed svg { margin: 0; }
.sep { width: 1px; height: 20px; background: #c5c1bd; margin: 0 3px; }
.drop { width: 12px; flex: none; }
.drop::before { content: ""; display: block; width: 0; border: 4.500px solid transparent; border-top: 5px solid #a5a19d; border-bottom: 0; }

.body { flex: 1; display: flex; min-height: 0; border-top: 1px solid #f6f4f1; }
.panels { width: 343px; display: flex; flex-direction: column; }
.panel { display: flex; flex-direction: column; min-height: 0; }
.nav { height: 226px; }
.layers { flex: 1; }
.hsplit { height: 5px; background: radial-gradient(circle at 1px 1px, #bbb 1px, transparent 1.200px) 50% 1px / 3px 4px repeat-x; margin: 0 162px; flex: none; }
.panel h2 { font: 12px/20px "DejaVu Sans", sans-serif; height: 20px; padding: 0 2px 0 4px; display: flex; justify-content: space-between; align-items: center; flex: none; }
h2 svg, .dialog h1 svg { width: 12px; height: 12px; margin-left: 2px; display: block; }
h2 span, .dialog h1 span { display: flex; }
.ptools { height: 30px; padding-left: 8px; display: flex; align-items: center; gap: 9px; flex: none; }
.nav .ptools { padding-bottom: 2px; }
.ptools svg { width: 16px; height: 16px; }
.ptools em { border: 5px solid transparent; border-top: 5px solid #444; border-bottom: 0; margin: 0 -2px 0 -5px; }
.list { flex: 1; border: 1px solid #b2aeaa; background: #fff; display: flex; min-height: 0; }
.rows { flex: 1; overflow: hidden; }
.rows p { height: 18px; line-height: 19px; display: flex; align-items: center; white-space: nowrap; }
.rows p > i { width: 23px; height: 10px; flex: none; }
.arr::before { content: ""; display: block; width: 0; margin-left: 7px; border: 5px solid transparent; border-left: 5px solid #444; border-right: 0; }
.rows svg { width: 16px; height: 16px; margin-right: 6px; flex: none; }
.nav .rows { padding-top: 1px; }
.nav .rows p > i { margin-top: -2px; }
.layers .rows p { font-weight: bold; font-style: italic; color: #808080; }
.layers .rows p.on { font-style: normal; color: #000; }
.layers .rows p.sel { background: #308cc6; color: #fff; }
.sel span { border-bottom: 1px solid #fff; height: 16px; line-height: 18px; }
.rows b, .ck { width: 14px; height: 14px; border: 1px solid #b4b0ac; background: #fff; flex: none; position: relative; }
.rows b { margin-right: 6px; }
.on b::after, .ck::after { content: ""; position: absolute; left: 4px; top: 0; width: 4px; height: 8px; border: solid #000; border-width: 0 2px 2px 0; transform: rotate(35deg); }
.scroll { width: 14px; border-left: 1px solid #b2aeaa; display: flex; flex-direction: column; background: #f8f6f4; }
.scroll i { display: block; }
.up, .dn { height: 14px; flex: none; position: relative; }
.up { border-bottom: 1px solid #b2aeaa; }
.dn { border-top: 1px solid #b2aeaa; }
.up::before, .dn::before { content: ""; position: absolute; left: 2px; top: 5px; border: 4px solid transparent; border-bottom: 4px solid #444; border-top: 0; }
.dn::before { border: 4px solid transparent; border-top: 4px solid #444; border-bottom: 0; }
.thumb { flex: 1; background: linear-gradient(90deg, #fcfbfa, #efedeb); }
.track { background: #e3e1de; border-top: 1px solid #b2aeaa; height: 69px; }
.layers .track { height: 16px; }
.vsplit { width: 6px; }
.map { width: 947px; height: 538px; border: 1px solid #b2aeaa; border-right: 0; display: block; flex: none; }

.status { height: 29px; font-size: 9px; line-height: 29px; display: grid; align-items: center; white-space: nowrap; grid-template-columns: 337px 94px 58px 92px 34px 32px 95px 34px 60px 94px 59px 91px 25px 74px 19px 75px 23px; }
.search { margin-left: 4px; width: 325px; height: 23px; border: 1px solid #b0aca8; border-radius: 3px; background: #fff; color: #777; font-size: 12px; line-height: 22px; display: flex; align-items: center; padding-left: 8px; gap: 8px; }
.status svg { width: 16px; height: 16px; display: block; }
.status .search svg { width: 12px; height: 12px; }
.status .c5 { margin-left: 4px; }
.status .c8 { margin: 0 0 0 12px; width: 14px; }
.field { height: 22px; line-height: 20px; border: 1px solid #b0aca8; border-radius: 3px; background: #fff; padding-left: 6px; display: flex; justify-content: space-between; }
.combo { padding-left: 4px; }
.combo i { width: 20px; border-left: 1px solid #b0aca8; background: linear-gradient(#fcfbfa, #eeecea); padding: 8px 0 0 5px; border-radius: 0 3px 3px 0; }
.combo i::before { content: ""; display: block; width: 0; border: 4px solid transparent; border-top: 5px solid #555; border-bottom: 0; }
.spin { padding-left: 4px; }
.spin i { width: 14px; border-left: 1px solid #b0aca8; padding: 4px 0 0 2px; background: #f8f6f4; border-radius: 0 3px 3px 0; }
.spin i::before, .spin i::after { content: ""; display: block; width: 0; border: 4px solid transparent; border-bottom: 4px solid #555; border-top: 0; }
.spin i::after { border: 4px solid transparent; border-top: 4px solid #555; border-bottom: 0; margin-top: 5px; }
.c11 { padding-left: 10px; }
.ck { margin-left: 6px; }

.dialog { position: absolute; left: 838px; top: 85px; width: 528px; height: 642px; background: #efebe7; border: 1px solid #c5c1bc; border-right: 2px solid #c5c1bc; border-bottom: 2px solid #c5c1bc; box-shadow: 0 3px 17px rgba(0, 0, 0, .42); display: flex; flex-direction: column; padding-left: 8px; }
.dialog h1 { font: 12px/20px "DejaVu Sans", sans-serif; height: 20px; margin-left: -5px; padding-right: 0; display: flex; justify-content: space-between; align-items: center; }
.logo { width: 270px; height: 113px; margin-top: 8px; flex: none; display: block; }
.wordmark text { font-family: Inter, "Open Sans", sans-serif; font-weight: 800; }
.tabs { display: flex; align-items: flex-end; height: 32px; position: relative; z-index: 1; margin-bottom: -1px; padding-bottom: 1px; }
.tabs span { height: 23px; line-height: 23px; border: 1px solid #b2aeaa; border-bottom: 0; border-left: 0; border-radius: 0 2px 0 0; padding: 0 12px 0 11.500px; background: #e8e4e1; }
.tabs .cur { height: 26px; line-height: 26px; background: linear-gradient(#fff, #fcf8f5); border-left: 1px solid #b2aeaa; border-radius: 3px 3px 0 0; margin-bottom: -1px; width: 65px; padding: 0 0 0 11px; }
.pane { width: 509px; height: 458px; border: 1px solid #aaa6a2; background: #fcf8f5; }
.groups { display: flex; padding: 12px 0 0 22px; gap: 30px; }
.g1 { width: 200px; }
.g2 { width: 210px; }
.grp h3 { font: bold 12px/18px "DejaVu Sans", sans-serif; color: #000; padding-left: 1.500px; }
.box { height: 102px; border: 1px solid #dfdbd8; border-radius: 2px; background: #faf6f3; padding: 21px 0 0 18px; }
.r { display: flex; align-items: center; height: 20px; margin-bottom: 20px; }
.r::before { content: ""; width: 14px; height: 14px; border: 1px solid #a5a19d; border-radius: 7px; background: #fff; margin: 0 6px 0 0; }
.r.on::before { background: radial-gradient(circle, #3a3a3a 0 3px, #fff 3.700px); }
.box .r { margin-left: -1px; letter-spacing: -.02px; }
.out { margin: 19px 0 0 8px; width: 471px; height: 211px; background: #fff; border: 1px solid #b2aeaa; }
.prog { margin: 9px 0 0 16px; width: 451px; height: 23px; line-height: 22px; background: #fff; border: 1px solid #aaa6a2; border-radius: 2px; text-align: center; }
.btn { margin: 27px 0 0 201px; width: 89px; height: 25px; line-height: 24px; text-align: center; border: 1px solid #aaa6a2; border-radius: 2px; background: linear-gradient(#fff, #eeecea); }
```
